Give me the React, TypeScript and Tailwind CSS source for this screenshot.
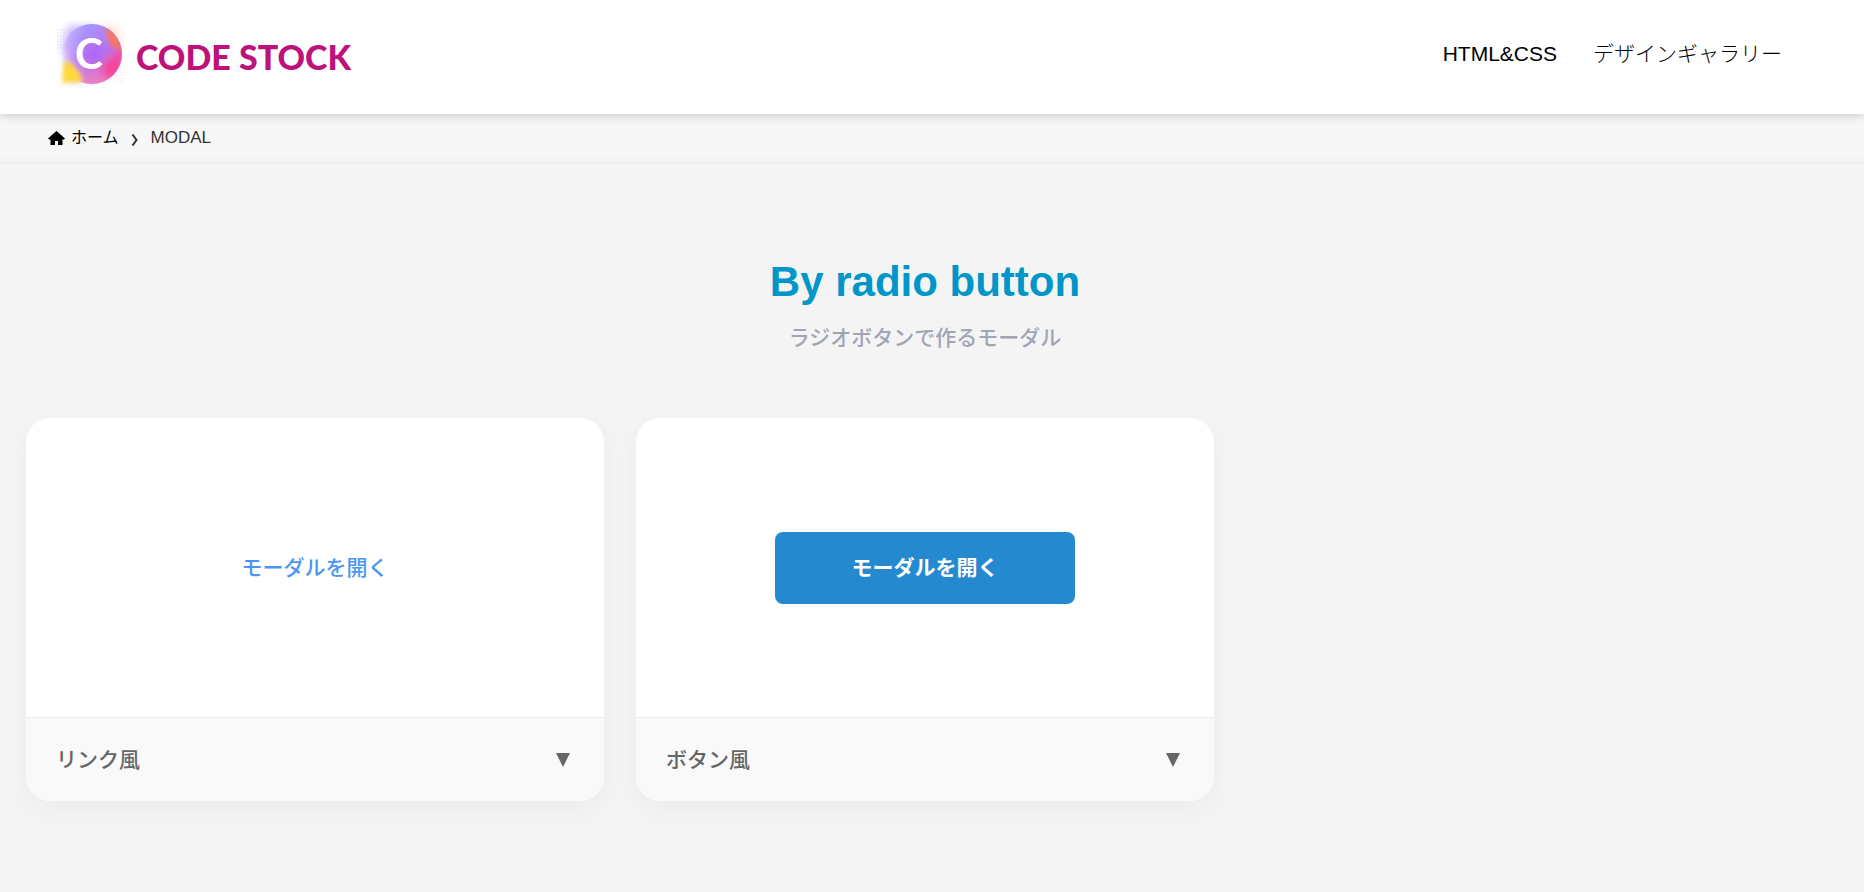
import type { ReactNode } from "react"

const jp = "font-['Liberation_Sans','Noto_Sans_CJK_JP',sans-serif]"

function Logo() {
  return (
    <svg viewBox="0 0 310 74" className="w-[310px] h-[74px]" role="img" aria-label="CODE STOCK">
      <defs>
        <linearGradient id="base" x1="0.35" y1="0" x2="0.65" y2="1">
          <stop offset="0" stopColor="#a398ff" />
          <stop offset="0.5" stopColor="#b974ee" />
          <stop offset="1" stopColor="#ee7fc0" />
        </linearGradient>
        {/* fades the disc out towards its left edge */}
        <linearGradient id="fade" x1="0" y1="0" x2="1" y2="0">
          <stop offset="0.02" stopColor="#000" />
          <stop offset="0.4" stopColor="#fff" />
        </linearGradient>
        <mask id="fadeMask">
          <rect x="4" y="0" width="70" height="70" fill="url(#fade)" />
        </mask>
        <clipPath id="disc">
          <circle cx="38" cy="34" r="30" />
        </clipPath>
        <filter id="soft2" x="-50%" y="-50%" width="200%" height="200%">
          <feGaussianBlur stdDeviation="2" />
        </filter>
        <filter id="soft4" x="-50%" y="-50%" width="200%" height="200%">
          <feGaussianBlur stdDeviation="4" />
        </filter>
        <filter id="soft6" x="-80%" y="-80%" width="260%" height="260%">
          <feGaussianBlur stdDeviation="6" />
        </filter>
        <pattern id="dots" width="3" height="3" patternUnits="userSpaceOnUse">
          <circle cx="1" cy="1" r="0.5" fill="#d9b8e8" />
        </pattern>
      </defs>
      {/* smeared edges around the disc */}
      <path d="M14 6H40V60H16L12 34L8 28Z" fill="#bda2fb" opacity="0.8" filter="url(#soft4)" />
      <path d="M46 5H62L68 26L60 30Z" fill="#ffb18f" opacity="0.35" filter="url(#soft4)" />
      <path d="M2 8H22V30H2Z" fill="url(#dots)" />
      <path d="M58 38L72 46V66L44 62Z" fill="url(#dots)" opacity="0.7" />
      <g mask="url(#fadeMask)">
        <circle cx="38" cy="34" r="30" fill="url(#base)" />
        <g clipPath="url(#disc)">
          <circle cx="40" cy="34" r="9" fill="#a962f7" filter="url(#soft6)" />
          <path d="M50 6C62 12 68 22 69 34L56 24Z" fill="#ff7458" filter="url(#soft2)" />
          <path d="M66 28C72 40 66 54 56 60L46 50Z" fill="#f93f94" filter="url(#soft4)" />
          <path d="M8 44C16 46 24 54 30 66H4Z" fill="#ffb98a" filter="url(#soft4)" />
        </g>
      </g>
      <path d="M10 42H16L26 54L27 62L8 63Z" fill="#ffd83d" filter="url(#soft2)" />
      <text x="21" y="49" fontSize="42" className="font-['Lato',sans-serif] font-bold" fill="#fff">
        C
      </text>
      <text x="82" y="50" fontSize="34" className="font-['Lato',sans-serif] font-black" fill="#bd127b">
        CODE STOCK
      </text>
    </svg>
  )
}

function Header() {
  return (
    <header className="relative flex items-center justify-between h-[114px] pl-[54px] pr-[82px] bg-white shadow-[0_1px_10px_rgba(0,0,0,0.2)]">
      <a href="#">
        <Logo />
      </a>
      <nav className="flex gap-9 pb-1.5 text-[21px] font-light text-black">
        <a href="#">HTML&amp;CSS</a>
        <a href="#">デザインギャラリー</a>
      </nav>
    </header>
  )
}

function Breadcrumb() {
  return (
    <nav
      aria-label="breadcrumb"
      className="flex items-center h-[50px] px-12 pb-0.5 bg-[#f7f7f7] text-base shadow-[inset_0_-8px_8px_-8px_rgba(0,0,0,0.1)]"
    >
      <a href="#" className="flex items-center gap-1.5 text-black">
        <svg viewBox="0 0 17 14" className="w-[17px] h-3.5" aria-hidden="true">
          <path d="M8.500 0L17 7.500L16 8.500H14.500V14H10V10H7V14H2.500V8.500H1L0 7.500Z" fill="currentColor" />
        </svg>
        ホーム
      </a>
      <svg viewBox="0 0 8 12" className="w-2 h-3 mt-1 mx-3" aria-hidden="true">
        <path d="M1.5 0.5L5.500 6L1.5 11.500" fill="none" stroke="#333" strokeWidth="2" />
      </svg>
      <span className="text-[17px] text-[#333]">MODAL</span>
    </nav>
  )
}

function Card({ title, children }: { title: string; children: ReactNode }) {
  return (
    <div className="rounded-3xl overflow-hidden bg-white shadow-[0_8px_24px_rgba(0,0,0,0.04)]">
      <div className="flex items-center justify-center h-[299px]">{children}</div>
      <button
        type="button"
        className="flex items-center justify-between w-full h-[84px] px-[30px] border-t border-[#ececec] bg-[#f9f9f9] text-[21px] font-medium text-[#666]"
      >
        <span>{title}</span>
        <svg viewBox="0 0 14 14" className="w-3.5 h-3.5 mr-1" aria-hidden="true">
          <path d="M0 0H14L7 14Z" fill="currentColor" />
        </svg>
      </button>
    </div>
  )
}

export default function App() {
  return (
    <div className={`min-h-screen bg-[#f4f4f4] ${jp}`}>
      <Header />
      <Breadcrumb />
      <main className="pl-[26px] pr-10 pt-[94px] pb-16">
        <h1 className="text-center text-[42px] leading-[48px] font-bold text-[#0096c8]">By radio button</h1>
        <p className="mt-4 text-center text-[21px] leading-8 font-medium text-[#a0a5b4]">
          ラジオボタンで作るモーダル
        </p>
        <div className="grid grid-cols-3 gap-8 mt-16">
          <Card title="リンク風">
            <a href="#" className="text-[21px] font-medium text-[#4c95f5]">
              モーダルを開く
            </a>
          </Card>
          <Card title="ボタン風">
            <button
              type="button"
              className="w-[300px] h-[72px] rounded-lg bg-[#2589d0] text-[21px] font-bold text-white"
            >
              モーダルを開く
            </button>
          </Card>
        </div>
      </main>
    </div>
  )
}
